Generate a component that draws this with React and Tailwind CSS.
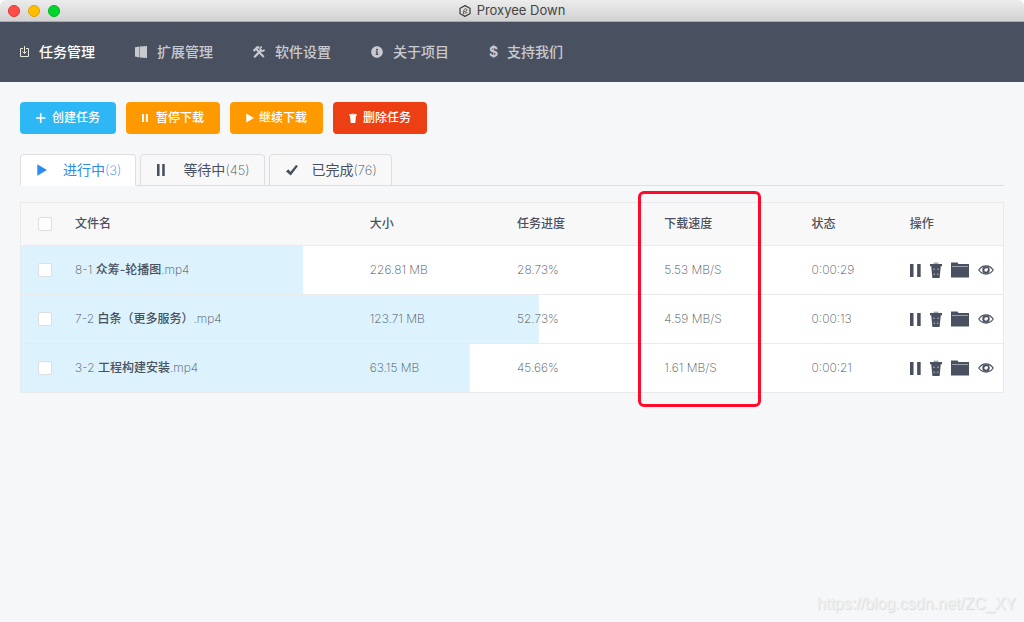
import { useState } from 'react';
import { FaInfoCircle } from 'react-icons/fa';
import clsx from 'clsx';

/* ─── Icons ─── */
const DownloadIcon = () => (
  <svg className="w-[9px] h-3" viewBox="0 0 9 12" fill="none" stroke="#e6e8dc">
    <path d="M3 2.5H.5v8h8v-8H6M4.5 0v7.5M2.5 5.5l2 2 2-2" />
  </svg>
);

const WindowsIcon = () => (
  <svg className="w-3 h-3" viewBox="0 0 12 12" fill="currentColor">
    <path d="M0 1.2 4.5.6v10.8L0 10.6zM5 .5 12 0v12l-7-.6z" />
  </svg>
);

const ToolsIcon = () => (
  <svg className="w-3 h-3" viewBox="0 0 12 12" fill="none" stroke="currentColor">
    <path d="M1.2 11.2 9 3.6" strokeWidth="2.2" />
    <path d="M8.9.8a2.2 2.2 0 1 0 2.5 2.7" strokeWidth="1.6" />
    <path d="M.6 5 4.400 1.200 6.200 1.600" strokeWidth="2.2" />
    <path d="M3.200 3 10.800 11" strokeWidth="2" />
  </svg>
);

const PlusIcon = () => (
  <svg className="w-3 h-3" viewBox="0 0 12 12" fill="none" stroke="currentColor" strokeWidth="1.6">
    <path d="M4.7 1v10M0 6h9.5" />
  </svg>
);

const PauseIcon = ({ className }) => (
  <svg className={className} viewBox="0 0 10 12" fill="currentColor" preserveAspectRatio="none">
    <path d="M0 0h3.2v12H0zM6.5 0h3.2v12H6.5z" />
  </svg>
);

const PlayIcon = ({ className }) => (
  <svg className={className} viewBox="0 0 10 12" fill="currentColor">
    <path d="M.3.3 10 6 .3 11.7z" />
  </svg>
);

const CheckIcon = () => (
  <svg className="w-3 h-3" viewBox="0 0 12 12" fill="currentColor">
    <path d="M0 7.4 2.3 5.3 4.5 7.7 10 .9 12 2 4.8 11.5z" />
  </svg>
);

const TrashIcon = ({ className, dots }) => (
  <svg className={className} viewBox="0 0 12 16" fill="currentColor">
    <path d="M3.6 2V.6h4.8V2" opacity=".5" />
    <path d="M0 2h12v2.2H0zM1.2 4h9.6L9.6 16H2.4z" />
    {dots && (
      <path
        d="M3.4 6.5h1.2v1.4H3.4zM7.4 6.5h1.2v1.4H7.4zM3.7 11.6h1.2V13H3.7zM7.1 11.6h1.2V13H7.1z"
        fill="#aeb2ba"
      />
    )}
  </svg>
);

const FolderIcon = () => (
  <svg className="w-[18px] h-4" viewBox="0 0 18 16" fill="currentColor">
    <path d="M0 .5h6.5l1 1.5H18v13.5H0z" />
    <path d="M1 4.5h16" stroke="#b3b7be" strokeWidth=".8" />
  </svg>
);

const EyeIcon = () => (
  <svg className="w-4 h-4" viewBox="0 0 16 16" fill="none" stroke="currentColor">
    <path d="M.8 8C4.5 2.6 11.5 2.6 15.2 8 11.5 13.4 4.5 13.4.8 8z" strokeWidth="1.2" />
    <circle cx="8" cy="8" r="2.7" strokeWidth="2" />
    <circle cx="9" cy="7.2" r="1" fill="#fff" stroke="none" />
  </svg>
);

const LogoIcon = () => (
  <svg className="w-3 h-3" viewBox="0 0 12 12" fill="none" stroke="#3c3c36">
    <path d="M6 .6 11 3.3v5.4l-5 2.7-5-2.7V3.3z" strokeWidth="1.2" />
    <path d="M4.3 9.3 4.8 5.5C5.2 3.2 8 3.2 7.9 5 7.8 6.6 5.5 6.8 5 6.2M5.5 8.3 8.3 7.5" strokeWidth=".8" />
  </svg>
);

/* ─── Data ─── */
const menus = [
  { label: '任务管理', icon: <DownloadIcon /> },
  { label: '扩展管理', icon: <WindowsIcon /> },
  { label: '软件设置', icon: <ToolsIcon /> },
  { label: '关于项目', icon: <FaInfoCircle className="w-3 h-3" /> },
  { label: '支持我们', icon: <span className="w-2 font-bold">$</span> },
];

const actions = [
  { label: '创建任务', color: 'bg-[#2db7f5]', icon: <PlusIcon /> },
  { label: '暂停下载', color: 'bg-[#ff9900]', icon: <PauseIcon className="w-1.5 h-2 mr-1" /> },
  { label: '继续下载', color: 'bg-[#ff9900]', icon: <PlayIcon className="w-2 h-2.5 mr-px" /> },
  { label: '删除任务', color: 'bg-[#ed3f14]', icon: <TrashIcon className="w-2 h-2.5 mr-0.5" /> },
];

const tabs = [
  { key: 'running', label: '进行中', count: 3, icon: <PlayIcon className="w-2.5 h-3" /> },
  { key: 'waiting', label: '等待中', count: 45, icon: <PauseIcon className="w-2 h-3" /> },
  { key: 'done', label: '已完成', count: 76, icon: <CheckIcon /> },
];

const tasks = [
  { no: '8-1', title: '众筹-轮播图', size: '226.81 MB', progress: 28.73, speed: '5.53 MB/S', left: '0:00:29' },
  { no: '7-2', title: '白条（更多服务）', size: '123.71 MB', progress: 52.73, speed: '4.59 MB/S', left: '0:00:13' },
  { no: '3-2', title: '工程构建安装', size: '63.15 MB', progress: 45.66, speed: '1.61 MB/S', left: '0:00:21' },
];

const checkboxClass =
  'block mx-auto w-3.5 h-3.5 appearance-none rounded-xs border border-[#dddee1] bg-white checked:bg-[#2d8cf0]';

/* ─── Title bar ─── */
function TitleBar() {
  return (
    <div className="bg-white">
      <div className="grid grid-cols-3 items-center h-[22px] px-2 rounded-t-md border-b border-[#a9a9a9] bg-linear-to-b from-[#ececec] to-[#d2d2d2]">
        <div className="flex gap-2">
          <button aria-label="关闭" className="w-3 h-3 rounded-full border border-[#e0352f] bg-[#ff4d47]" />
          <button aria-label="最小化" className="w-3 h-3 rounded-full border border-[#e0a100] bg-[#ffbf00]" />
          <button aria-label="最大化" className="w-3 h-3 rounded-full border border-[#00b51f] bg-[#00d72d]" />
        </div>
        <div className="flex items-center justify-center gap-1.5 text-[13px] text-[#444]">
          <LogoIcon />
          <span>Proxyee Down</span>
        </div>
      </div>
    </div>
  );
}

/* ─── Task table ─── */
function TaskTable() {
  return (
    <div className="relative mt-4 border border-[#e9eaec] bg-white">
      <table className="w-full table-fixed border-separate border-spacing-0 text-xs text-left">
        <thead className="bg-[#f8f8f9]">
          <tr className="h-[43px] *:border-b *:border-[#e9eaec] *:font-medium">
            <th className="w-[5%] pr-0.5">
              <input type="checkbox" aria-label="全选" className={checkboxClass} />
            </th>
            <th className="w-[30%] px-[5px]">文件名</th>
            <th className="w-[15%] px-[5px]">大小</th>
            <th className="w-[15%] px-[5px]">任务进度</th>
            <th className="w-[15%] px-[5px]">下载速度</th>
            <th className="w-[10%] px-[5px]">状态</th>
            <th className="w-[10%] px-[5px]">操作</th>
          </tr>
        </thead>
        <tbody>
          {tasks.map((task) => (
            <tr
              key={task.no}
              className="h-[49px] bg-no-repeat bg-[linear-gradient(#dcf2fd,#dcf2fd)] font-extralight *:border-b *:border-[#e9eaec] last:h-12 last:*:border-b-0"
              style={{ backgroundSize: `${task.progress}% 100%` }}
            >
              <td className="pr-0.5">
                <input type="checkbox" aria-label={task.title} className={checkboxClass} />
              </td>
              <td className="px-[5px]">
                {task.no} <span className="font-medium">{task.title}</span>.mp4
              </td>
              <td className="px-[5px]">{task.size}</td>
              <td className="px-[5px]">{task.progress}%</td>
              <td className="px-[5px]">{task.speed}</td>
              <td className="px-[5px]">{task.left}</td>
              <td className="px-[5px]">
                <div className="flex items-center gap-[9px]">
                  <button aria-label="暂停"><PauseIcon className="w-[11px] h-[13px]" /></button>
                  <button aria-label="删除"><TrashIcon className="w-3 h-4" dots /></button>
                  <button aria-label="打开目录"><FolderIcon /></button>
                  <button aria-label="详情"><EyeIcon /></button>
                </div>
              </td>
            </tr>
          ))}
        </tbody>
      </table>

      {/* Highlight around the speed column */}
      <div className="absolute -top-3 -bottom-[15px] left-[calc(65%-21px)] w-[123px] rounded-md border-3 border-[#ff0a2b] pointer-events-none" />
    </div>
  );
}

export default function App() {
  const [activeTab, setActiveTab] = useState('running');

  return (
    <div className="relative min-h-screen bg-[#f5f7f9] text-[#495060] font-[Inter,'Noto_Sans_CJK_SC',sans-serif]">
      <TitleBar />

      <nav className="flex items-center gap-10 h-15 px-5 bg-[#495060] text-sm font-medium">
        {menus.map((menu, i) => (
          <a
            key={menu.label}
            href="#"
            className={clsx('flex items-center gap-2.5', i === 0 ? 'text-white' : 'text-[#c8cacf]')}
          >
            {menu.icon}
            {menu.label}
          </a>
        ))}
      </nav>

      <main className="p-5">
        <div className="flex gap-2.5">
          {actions.map((action) => (
            <button
              key={action.label}
              className={clsx('flex items-center gap-1 h-8 px-4 rounded text-xs font-medium text-white', action.color)}
            >
              {action.icon}
              {action.label}
            </button>
          ))}
        </div>

        <div role="tablist" className="flex gap-1 mt-5 border-b border-[#dddee1]">
          {tabs.map((tab) => (
            <button
              key={tab.key}
              role="tab"
              aria-selected={activeTab === tab.key}
              onClick={() => setActiveTab(tab.key)}
              className={clsx(
                'flex items-center h-8 pl-4 pr-3.5 -mb-px rounded-t border border-[#dddee1] text-sm',
                activeTab === tab.key ? 'bg-white border-b-white text-[#2d8cf0]' : 'bg-[#f8f8f9]'
              )}
            >
              <span className="w-[26px]">{tab.icon}</span>
              {tab.label}
              <span className="text-[13px] font-extralight">({tab.count})</span>
            </button>
          ))}
        </div>

        <TaskTable />
      </main>

      <p className="absolute right-2 bottom-1.5 font-['Liberation_Sans',Arial,sans-serif] text-base text-[#eff1f2] text-shadow-[1px_1px_1px_#d6d8da]">
        https://blog.csdn.net/ZC_XY
      </p>
    </div>
  );
}
